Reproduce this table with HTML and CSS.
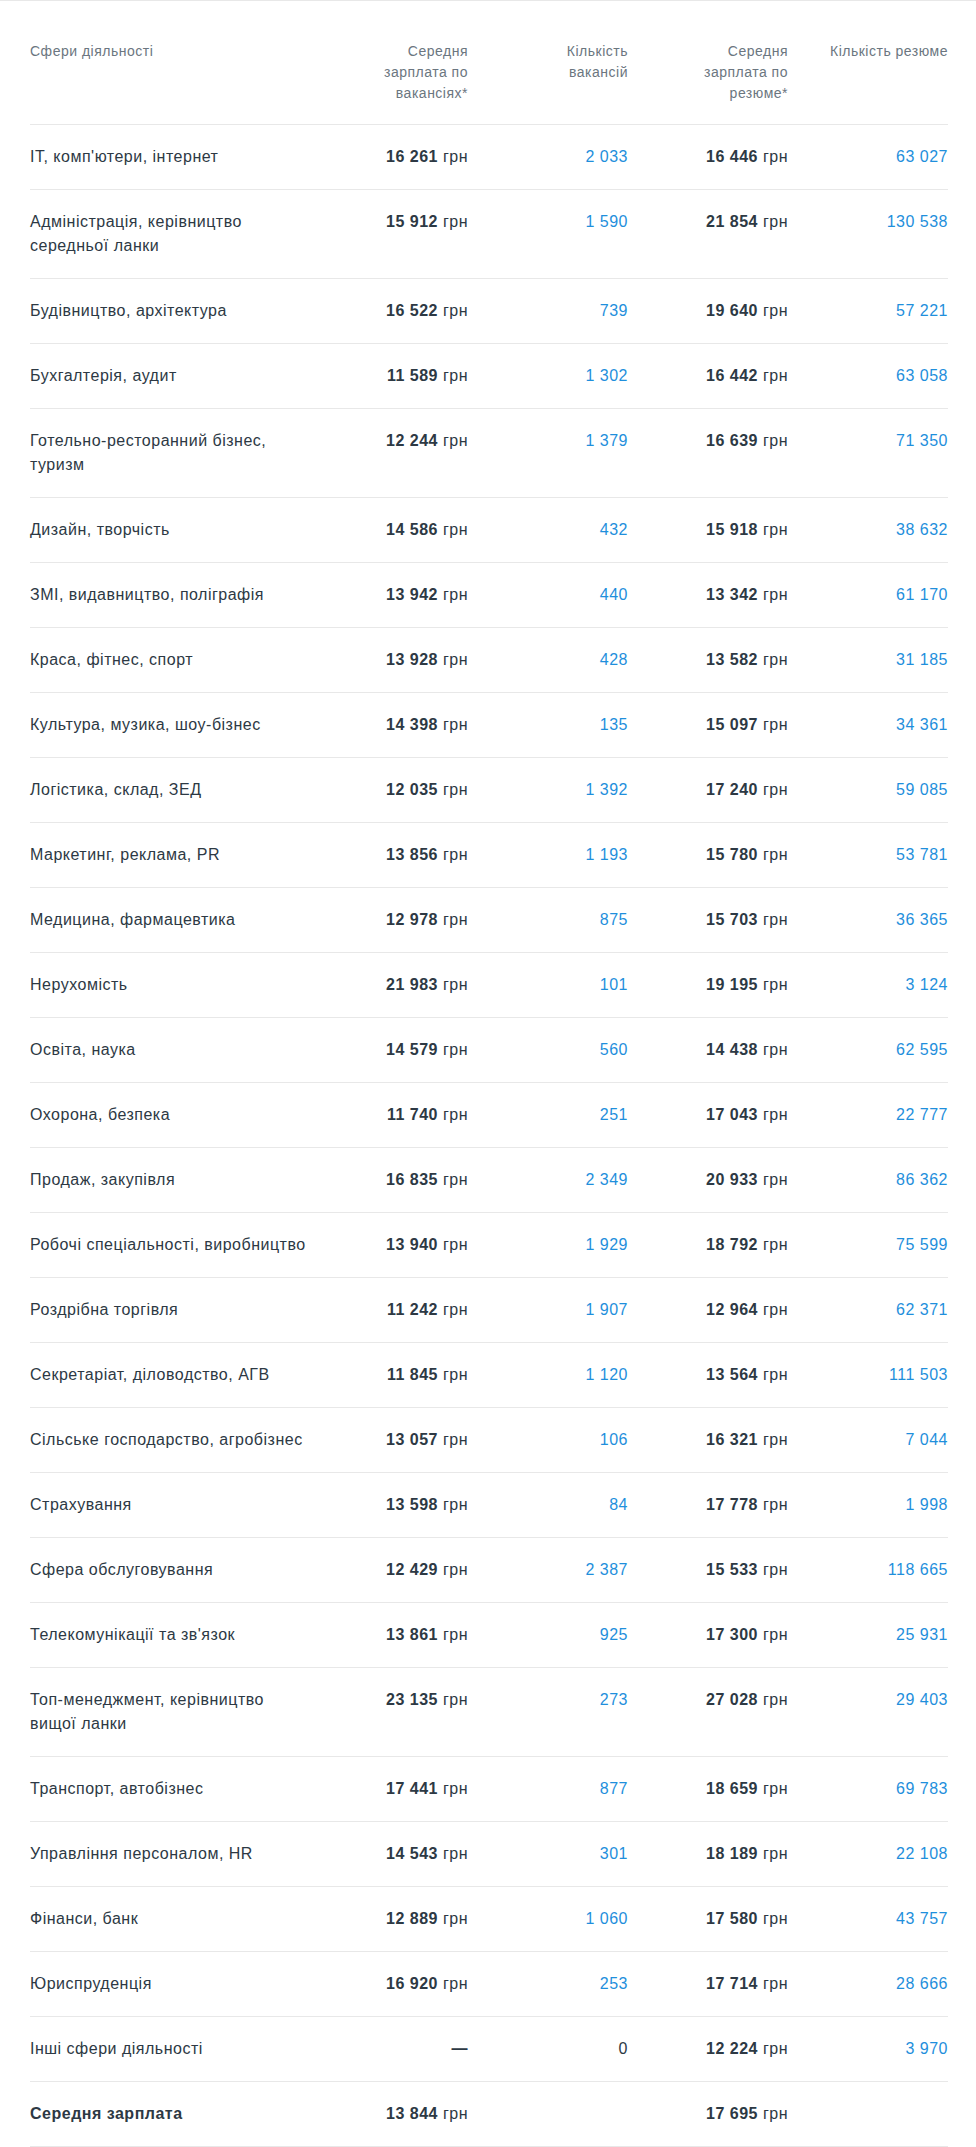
FILE: index.html
```html
<!DOCTYPE html>
<html lang="uk">
<head>
<meta charset="utf-8">
<title>Зарплати за сферами діяльності</title>
<link rel="stylesheet" href="styles.css">
</head>
<body>
<div class="page">
<table class="stats">
<colgroup>
<col class="c-name"><col class="c-first"><col class="c-num"><col class="c-num"><col class="c-last">
</colgroup>
<thead>
<tr>
<th class="name">Сфери діяльності</th>
<th class="num">Середня зарплата по вакансіях*</th>
<th class="num narrow">Кількість вакансій</th>
<th class="num narrow">Середня зарплата по резюме*</th>
<th class="num wide">Кількість резюме</th>
</tr>
</thead>
<tbody>
<tr><td class="name">IT, комп'ютери, інтернет</td><td class="num"><b>16 261</b> грн</td><td class="num link">2 033</td><td class="num"><b>16 446</b> грн</td><td class="num link">63 027</td></tr>
<tr><td class="name">Адміністрація, керівництво середньої ланки</td><td class="num"><b>15 912</b> грн</td><td class="num link">1 590</td><td class="num"><b>21 854</b> грн</td><td class="num link">130 538</td></tr>
<tr><td class="name">Будівництво, архітектура</td><td class="num"><b>16 522</b> грн</td><td class="num link">739</td><td class="num"><b>19 640</b> грн</td><td class="num link">57 221</td></tr>
<tr><td class="name">Бухгалтерія, аудит</td><td class="num"><b>11 589</b> грн</td><td class="num link">1 302</td><td class="num"><b>16 442</b> грн</td><td class="num link">63 058</td></tr>
<tr><td class="name">Готельно-ресторанний бізнес, туризм</td><td class="num"><b>12 244</b> грн</td><td class="num link">1 379</td><td class="num"><b>16 639</b> грн</td><td class="num link">71 350</td></tr>
<tr><td class="name">Дизайн, творчість</td><td class="num"><b>14 586</b> грн</td><td class="num link">432</td><td class="num"><b>15 918</b> грн</td><td class="num link">38 632</td></tr>
<tr><td class="name">ЗМІ, видавництво, поліграфія</td><td class="num"><b>13 942</b> грн</td><td class="num link">440</td><td class="num"><b>13 342</b> грн</td><td class="num link">61 170</td></tr>
<tr><td class="name">Краса, фітнес, спорт</td><td class="num"><b>13 928</b> грн</td><td class="num link">428</td><td class="num"><b>13 582</b> грн</td><td class="num link">31 185</td></tr>
<tr><td class="name">Культура, музика, шоу-бізнес</td><td class="num"><b>14 398</b> грн</td><td class="num link">135</td><td class="num"><b>15 097</b> грн</td><td class="num link">34 361</td></tr>
<tr><td class="name">Логістика, склад, ЗЕД</td><td class="num"><b>12 035</b> грн</td><td class="num link">1 392</td><td class="num"><b>17 240</b> грн</td><td class="num link">59 085</td></tr>
<tr><td class="name">Маркетинг, реклама, PR</td><td class="num"><b>13 856</b> грн</td><td class="num link">1 193</td><td class="num"><b>15 780</b> грн</td><td class="num link">53 781</td></tr>
<tr><td class="name">Медицина, фармацевтика</td><td class="num"><b>12 978</b> грн</td><td class="num link">875</td><td class="num"><b>15 703</b> грн</td><td class="num link">36 365</td></tr>
<tr><td class="name">Нерухомість</td><td class="num"><b>21 983</b> грн</td><td class="num link">101</td><td class="num"><b>19 195</b> грн</td><td class="num link">3 124</td></tr>
<tr><td class="name">Освіта, наука</td><td class="num"><b>14 579</b> грн</td><td class="num link">560</td><td class="num"><b>14 438</b> грн</td><td class="num link">62 595</td></tr>
<tr><td class="name">Охорона, безпека</td><td class="num"><b>11 740</b> грн</td><td class="num link">251</td><td class="num"><b>17 043</b> грн</td><td class="num link">22 777</td></tr>
<tr><td class="name">Продаж, закупівля</td><td class="num"><b>16 835</b> грн</td><td class="num link">2 349</td><td class="num"><b>20 933</b> грн</td><td class="num link">86 362</td></tr>
<tr><td class="name">Робочі спеціальності, виробництво</td><td class="num"><b>13 940</b> грн</td><td class="num link">1 929</td><td class="num"><b>18 792</b> грн</td><td class="num link">75 599</td></tr>
<tr><td class="name">Роздрібна торгівля</td><td class="num"><b>11 242</b> грн</td><td class="num link">1 907</td><td class="num"><b>12 964</b> грн</td><td class="num link">62 371</td></tr>
<tr><td class="name">Секретаріат, діловодство, АГВ</td><td class="num"><b>11 845</b> грн</td><td class="num link">1 120</td><td class="num"><b>13 564</b> грн</td><td class="num link">111 503</td></tr>
<tr><td class="name">Сільське господарство, агробізнес</td><td class="num"><b>13 057</b> грн</td><td class="num link">106</td><td class="num"><b>16 321</b> грн</td><td class="num link">7 044</td></tr>
<tr><td class="name">Страхування</td><td class="num"><b>13 598</b> грн</td><td class="num link">84</td><td class="num"><b>17 778</b> грн</td><td class="num link">1 998</td></tr>
<tr><td class="name">Сфера обслуговування</td><td class="num"><b>12 429</b> грн</td><td class="num link">2 387</td><td class="num"><b>15 533</b> грн</td><td class="num link">118 665</td></tr>
<tr><td class="name">Телекомунікації та зв'язок</td><td class="num"><b>13 861</b> грн</td><td class="num link">925</td><td class="num"><b>17 300</b> грн</td><td class="num link">25 931</td></tr>
<tr><td class="name">Топ-менеджмент, керівництво вищої ланки</td><td class="num"><b>23 135</b> грн</td><td class="num link">273</td><td class="num"><b>27 028</b> грн</td><td class="num link">29 403</td></tr>
<tr><td class="name">Транспорт, автобізнес</td><td class="num"><b>17 441</b> грн</td><td class="num link">877</td><td class="num"><b>18 659</b> грн</td><td class="num link">69 783</td></tr>
<tr><td class="name">Управління персоналом, HR</td><td class="num"><b>14 543</b> грн</td><td class="num link">301</td><td class="num"><b>18 189</b> грн</td><td class="num link">22 108</td></tr>
<tr><td class="name">Фінанси, банк</td><td class="num"><b>12 889</b> грн</td><td class="num link">1 060</td><td class="num"><b>17 580</b> грн</td><td class="num link">43 757</td></tr>
<tr><td class="name">Юриспруденція</td><td class="num"><b>16 920</b> грн</td><td class="num link">253</td><td class="num"><b>17 714</b> грн</td><td class="num link">28 666</td></tr>
<tr><td class="name">Інші сфери діяльності</td><td class="num"><b>—</b></td><td class="num">0</td><td class="num"><b>12 224</b> грн</td><td class="num link">3 970</td></tr>
<tr class="total"><td class="name"><b>Середня зарплата</b></td><td class="num"><b>13 844</b> грн</td><td class="num"></td><td class="num"><b>17 695</b> грн</td><td class="num"></td></tr>
</tbody>
</table>
</div>
</body>
</html>
```

FILE: styles.css
```css
html, body {
  margin: 0;
  padding: 0;
  background: #ffffff;
}

body {
  font-family: "Liberation Sans", Arial, sans-serif;
  color: #2d3944;
  letter-spacing: 0.5px;
}

.page {
  border-top: 1px solid #e8e8e8;
  padding: 0 28px 0 30px;
}

.stats {
  width: 918px;
  border-collapse: collapse;
  table-layout: fixed;
}

.c-name { width: 284px; }
.c-first { width: 154px; }
.c-num { width: 160px; }
.c-last { width: 160px; }

.stats th {
  font-weight: normal;
  font-size: 14px;
  line-height: 21px;
  color: #6b7680;
  vertical-align: top;
  padding: 40px 0 20px 40px;
  border-bottom: 1px solid #e8e8e8;
}

.stats th.name {
  text-align: left;
  padding-left: 0;
}

.stats th.num {
  text-align: right;
}

.stats th.narrow {
  padding-left: 46px;
}

.stats th.wide {
  padding-left: 24px;
}

.stats td {
  font-size: 16px;
  line-height: 24px;
  vertical-align: top;
  padding: 20px 0 20px 40px;
  border-bottom: 1px solid #e8e8e8;
}

.stats td.name {
  text-align: left;
  padding-left: 0;
}

.stats td.num {
  text-align: right;
}

.stats td.link {
  color: #1f8fdc;
}

.stats b {
  font-weight: bold;
}
```
